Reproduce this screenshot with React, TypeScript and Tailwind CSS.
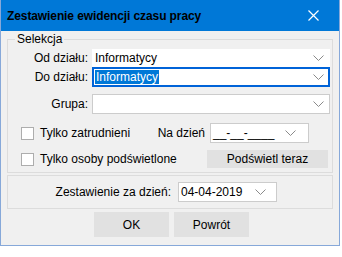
const Chevron = ({ className = '' }: { className?: string }) => (
  <svg width="11" height="6" viewBox="0 0 11 6" className={className}>
    <polyline points="0.5,0.5 5.5,5.5 10.5,0.5" fill="none" stroke="#8a8a8a" strokeWidth="1" />
  </svg>
);

const Checkbox = () => <div className="w-[13px] h-[13px] border border-[#adadad] bg-white shrink-0" />;

export default function App() {
  return (
    <div className="w-[342px] h-[257px] bg-white text-[12px] text-black" style={{ fontFamily: '"Liberation Sans", Arial, sans-serif' }}>
      <div className="w-[340px] h-[246px] border border-[#86a8d9] border-t-0 bg-[#f0f0f0] flex flex-col">
        {/* title bar */}
        <div className="h-[31px] bg-[#0078d7] flex items-center justify-between pl-[6px] pr-[20px] shrink-0">
          <span className="text-[12px] font-bold text-black tracking-[-0.1px]">Zestawienie ewidencji czasu pracy</span>
          <svg width="11" height="11" viewBox="0 0 11 11">
            <path d="M0.5 0.5 L10.5 10.5 M10.5 0.5 L0.5 10.5" stroke="white" strokeWidth="1.2" />
          </svg>
        </div>

        <div className="px-[6px]">
          <fieldset className="mt-[1px] border border-[#dcdcdc] h-[141px] pb-0">
            <legend className="ml-[7px] px-[2px] leading-[15px]">Selekcja</legend>

            <div className="grid grid-cols-[80px_238px] gap-x-[4px] items-center mt-[2px]">
              <span className="text-right">Od działu:</span>
              <div className="h-[18px] bg-white flex items-center justify-between pl-[3px] pr-[6px]">
                <span>Informatycy</span>
                <Chevron />
              </div>

              <span className="text-right">Do działu:</span>
              <div className="h-[20px] bg-white border-2 border-[#0063d8] flex items-center justify-between pl-[1px] pr-[4px]">
                <span className="bg-[#0078d7] text-white px-[1px] leading-[14px]">Informatycy</span>
                <Chevron />
              </div>

              <span className="text-right mt-[7px]">Grupa:</span>
              <div className="mt-[7px] h-[20px] bg-white border border-[#cccccc] flex items-center justify-end pr-[5px]">
                <Chevron />
              </div>
            </div>

            <div className="flex items-center mt-[9px] h-[20px] pl-[13px] pr-[23px]">
              <Checkbox />
              <span className="ml-[6px] flex-1">Tylko zatrudnieni</span>
              <span>Na dzień</span>
              <div className="ml-[5px] w-[99px] h-[20px] bg-white border border-[#cccccc] flex items-center justify-between pl-[2px] pr-[12px]">
                <span>__-__-____</span>
                <Chevron />
              </div>
            </div>

            <div className="flex items-center mt-[7px] h-[18px] pl-[13px]">
              <Checkbox />
              <span className="ml-[6px] w-[167px]">Tylko osoby podświetlone</span>
              <div className="w-[121px] h-[18px] bg-[#e1e1e1] flex items-center justify-center">
                Podświetl teraz
              </div>
            </div>
          </fieldset>

          <div className="mt-[2px] h-[34px] border border-[#dcdcdc] flex items-center">
            <span className="w-[163px] text-right">Zestawienie za dzień:</span>
            <div className="ml-[7px] w-[99px] h-[20px] bg-white border border-[#cccccc] flex items-center justify-between pl-[2px] pr-[10px]">
              <span>04-04-2019</span>
              <Chevron />
            </div>
          </div>

          <div className="flex justify-center gap-[5px] mt-[3px] pl-[3px]">
            <div className="w-[75px] h-[25px] bg-[#e1e1e1] flex items-center justify-center">OK</div>
            <div className="w-[75px] h-[25px] bg-[#e1e1e1] flex items-center justify-center">Powrót</div>
          </div>
        </div>
      </div>
    </div>
  );
}
